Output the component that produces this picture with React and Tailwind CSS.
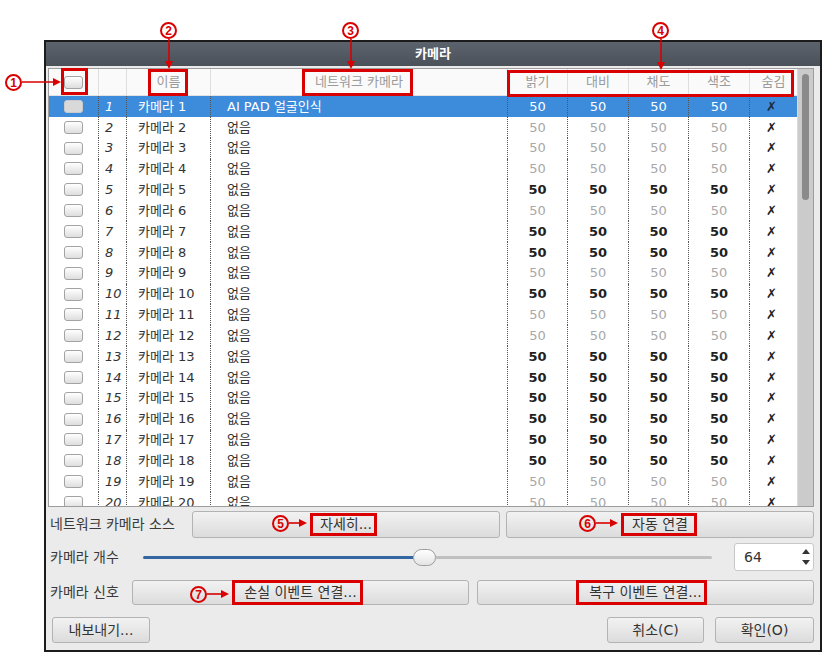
import React from "react";

const COLS =
  "grid grid-cols-[49px_28px_84px_297px_60px_61px_60px_61px_48px]";
const grey = new Set([2, 3, 4, 6, 9, 11, 12, 19, 20]);
const rows = Array.from({ length: 20 }, (_, i) => i + 1);

function Check({ selected }) {
  return (
    <div
      className={
        selected
          ? "w-[19px] h-[13px] rounded-[3px] border border-[#cacaca] bg-[#d9d9d9]"
          : "w-[19px] h-[13px] rounded-[3px] border border-[#a3a3a3] bg-linear-to-b from-white to-[#dedede]"
      }
    />
  );
}

function Btn({ children, className }) {
  return (
    <div
      className={
        "flex items-center justify-center rounded-[3px] border border-[#b3b3b3] bg-linear-to-b from-[#f2f2f2] to-[#dcdcdc] text-[14px] text-[#333] " +
        (className || "")
      }
    >
      {children}
    </div>
  );
}

function Row({ n }) {
  const sel = n === 1;
  const g = grey.has(n);
  const valCls = sel
    ? "text-white"
    : g
    ? "text-[#a8a8a8]"
    : "text-[#1f1f1f] font-bold";
  const sep = "border-l border-dotted border-[#555]";
  return (
    <div
      className={`${COLS} h-[20.85px] shrink-0 text-[13px] ${
        sel ? "bg-[#3d8bdb] text-white" : "text-[#333]"
      }`}
    >
      <div className="flex items-center justify-center">
        <Check selected={sel} />
      </div>
      <div className={`${sep} flex items-center pl-[6px] italic`}>{n}</div>
      <div className={`${sep} flex items-center pl-[11px] whitespace-nowrap`}>
        카메라 {n}
      </div>
      <div className={`${sep} flex items-center pl-[16px] whitespace-nowrap`}>
        {sel ? "AI PAD 얼굴인식" : "없음"}
      </div>
      {[0, 1, 2, 3].map((k) => (
        <div
          key={k}
          className={`${sep} flex items-center justify-center ${valCls}`}
        >
          50
        </div>
      ))}
      <div
        className={`${sep} flex items-center justify-center text-[13px] pr-[4px] ${
          sel ? "text-[#1d2a3a]" : "text-[#222]"
        }`}
      >
        ✗
      </div>
    </div>
  );
}

function HArrow({ className, w }) {
  return (
    <svg className={"absolute " + className} width={w} height="8" viewBox={`0 0 ${w} 8`}>
      <line x1="0" y1="4" x2={w - 6} y2="4" stroke="#d80000" strokeWidth="1.6" />
      <polygon points={`${w - 8},0 ${w},4 ${w - 8},8`} fill="#d80000" />
    </svg>
  );
}

function VArrow({ className, h }) {
  return (
    <svg className={"absolute " + className} width="8" height={h} viewBox={`0 0 8 ${h}`}>
      <line x1="4" y1="0" x2="4" y2={h - 6} stroke="#d80000" strokeWidth="1.6" />
      <polygon points={`0,${h - 8} 8,${h - 8} 4,${h}`} fill="#d80000" />
    </svg>
  );
}

function Circ({ n, className }) {
  return (
    <div
      className={
        "absolute w-[17px] h-[17px] rounded-full border-2 border-[#d80000] text-[#d80000] text-[12px] font-bold leading-none flex items-center justify-center font-['Liberation_Sans',sans-serif] " +
        className
      }
    >
      {n}
    </div>
  );
}

function RBox({ className }) {
  return (
    <div
      className={"absolute border-[3px] border-[#d80000] " + className}
    />
  );
}

export default function App() {
  return (
    <div className="relative w-[835px] h-[662px] bg-white overflow-hidden pt-[40px] pl-[44px] font-['DejaVu_Sans','Noto_Sans_CJK_KR',sans-serif]">
      {/* window */}
      <div className="w-[778px] h-[612px] border-2 border-[#1c1c1c] bg-[#ebebeb] flex flex-col">
        <div className="h-[24px] shrink-0 bg-linear-to-b from-[#5d636d] to-[#4b5159] flex items-center justify-center text-white font-bold text-[13px]">
          카메라
        </div>
        <div className="flex-1 flex flex-col pl-[2px] pr-[6px] pt-[2px]">
          {/* table */}
          <div className="h-[439px] shrink-0 border border-[#9d9d9d] bg-white flex">
            <div className="w-[748px] flex flex-col">
              <div
                className={`${COLS} h-[27px] shrink-0 bg-[#fafafa] border-b border-[#e2e2e2] text-[13px] text-[#9a9a9a]`}
              >
                <div className="flex items-center justify-center">
                  <Check />
                </div>
                <div className="border-l border-[#dedede]" />
                <div className="border-l border-[#dedede] flex items-center justify-center">
                  이름
                </div>
                <div className="border-l border-[#dedede] flex items-center justify-center">
                  네트워크 카메라
                </div>
                {["밝기", "대비", "채도", "색조", "숨김"].map((t) => (
                  <div
                    key={t}
                    className="border-l border-[#dedede] flex items-center justify-center"
                  >
                    {t}
                  </div>
                ))}
              </div>
              <div className="flex-1 overflow-hidden flex flex-col">
                {rows.map((n) => (
                  <Row key={n} n={n} />
                ))}
              </div>
            </div>
            <div className="flex-1 bg-[#cbcbcb] border-l border-[#dadada] pt-[5px] flex justify-center">
              <div className="w-[7px] h-[126px] rounded-full bg-[#8a8a8a]" />
            </div>
          </div>

          {/* row 1 */}
          <div className="mt-[4px] h-[27px] shrink-0 flex items-stretch gap-[6px]">
            <div className="w-[138px] flex items-center pl-[2px] text-[14px] text-[#3a3a3a] whitespace-nowrap">
              네트워크 카메라 소스
            </div>
            <Btn className="flex-1">자세히...</Btn>
            <Btn className="flex-1">자동 연결</Btn>
          </div>

          {/* row 2 */}
          <div className="mt-[5px] h-[28px] shrink-0 flex items-center">
            <div className="w-[95px] pl-[2px] text-[14px] text-[#3a3a3a] whitespace-nowrap">
              카메라 개수
            </div>
            <div className="w-[569px] flex items-center">
              <div className="w-[270px] h-[3px] rounded-l bg-[#3467a2]" />
              <div className="w-[23px] h-[17px] rounded-full border border-[#9c9c9c] bg-linear-to-b from-white to-[#e4e4e4]" />
              <div className="flex-1 h-[3px] rounded-r bg-[#c0c0c0]" />
            </div>
            <div className="ml-auto w-[80px] h-[28px] bg-white border border-[#c8c8c8] rounded-[3px] flex items-center">
              <div className="flex-1 pl-[9px] text-[14px] text-[#333]">64</div>
              <div className="w-[15px] h-full flex flex-col items-center justify-between py-[5px]">
                <svg width="8" height="5" viewBox="0 0 8 5">
                  <polygon points="0,5 8,5 4,0" fill="#333" />
                </svg>
                <svg width="8" height="5" viewBox="0 0 8 5">
                  <polygon points="0,0 8,0 4,5" fill="#333" />
                </svg>
              </div>
            </div>
          </div>

          {/* row 3 */}
          <div className="mt-[9px] h-[25px] shrink-0 flex items-stretch gap-[8px]">
            <div className="w-[76px] flex items-center pl-[2px] text-[14px] text-[#3a3a3a] whitespace-nowrap">
              카메라 신호
            </div>
            <Btn className="flex-1">손실 이벤트 연결...</Btn>
            <Btn className="flex-1">복구 이벤트 연결...</Btn>
          </div>

          {/* row 4 */}
          <div className="mt-[12px] h-[26px] shrink-0 flex items-stretch">
            <Btn className="ml-[4px] w-[98px]">내보내기...</Btn>
            <Btn className="ml-auto w-[97px]">취소(C)</Btn>
            <Btn className="ml-[11px] w-[99px]">확인(O)</Btn>
          </div>
        </div>
      </div>

      {/* annotations overlay */}
      <Circ n="1" className="left-[5px] top-[74px]" />
      <HArrow className="left-[22px] top-[78px]" w={39} />
      <RBox className="left-[61px] top-[68px] w-[27px] h-[27px]" />

      <Circ n="2" className="left-[160px] top-[22px]" />
      <VArrow className="left-[165px] top-[39px]" h={30} />
      <RBox className="left-[148px] top-[69px] w-[40px] h-[27px]" />

      <Circ n="3" className="left-[342px] top-[22px]" />
      <VArrow className="left-[347px] top-[39px]" h={30} />
      <RBox className="left-[302px] top-[69px] w-[111px] h-[27px]" />

      <Circ n="4" className="left-[652px] top-[22px]" />
      <VArrow className="left-[657px] top-[39px]" h={31} />
      <RBox className="left-[507px] top-[70px] w-[287px] h-[27px]" />

      <Circ n="5" className="left-[272px] top-[515px]" />
      <HArrow className="left-[289px] top-[519px]" w={18} />
      <RBox className="left-[310px] top-[513px] w-[67px] h-[23px]" />

      <Circ n="6" className="left-[579px] top-[515px]" />
      <HArrow className="left-[596px] top-[519px]" w={22} />
      <RBox className="left-[621px] top-[513px] w-[76px] h-[23px]" />

      <Circ n="7" className="left-[190px] top-[586px]" />
      <HArrow className="left-[207px] top-[590px]" w={22} />
      <RBox className="left-[232px] top-[580px] w-[131px] h-[25px]" />

      <RBox className="left-[576px] top-[580px] w-[131px] h-[25px]" />
    </div>
  );
}
